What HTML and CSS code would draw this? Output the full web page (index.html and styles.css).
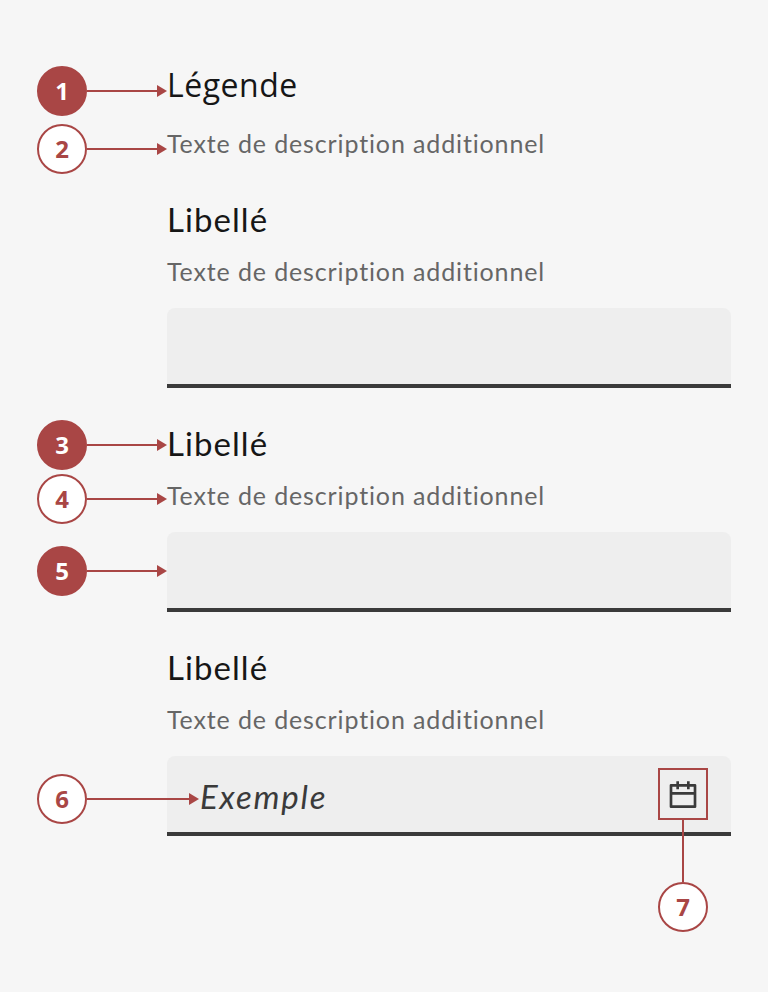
FILE: index.html
```html
<!DOCTYPE html>
<html lang="fr">
<head>
<meta charset="utf-8">
<title>Anatomie du champ de saisie</title>
<link rel="stylesheet" href="styles.css">
</head>
<body>
<main class="anatomy">
  <section class="group">
    <div class="legend"><span class="legend-text">Légende</span>
      <div class="callout callout-1"><span class="badge solid">1</span><i class="arrow"></i></div>
    </div>
    <div class="hint"><span>Texte de description additionnel</span>
      <div class="callout callout-2"><span class="badge">2</span><i class="arrow"></i></div>
    </div>
  </section>
  <section class="field">
    <div class="label"><span>Libellé</span></div>
    <div class="hint"><span>Texte de description additionnel</span></div>
    <div class="input"></div>
  </section>
  <section class="field">
    <div class="label"><span>Libellé</span>
      <div class="callout callout-3"><span class="badge solid">3</span><i class="arrow"></i></div>
    </div>
    <div class="hint"><span>Texte de description additionnel</span>
      <div class="callout callout-4"><span class="badge">4</span><i class="arrow"></i></div>
    </div>
    <div class="input">
      <div class="callout callout-5"><span class="badge solid">5</span><i class="arrow"></i></div>
    </div>
  </section>
  <section class="field">
    <div class="label"><span>Libellé</span></div>
    <div class="hint"><span>Texte de description additionnel</span></div>
    <div class="input">
      <span class="placeholder">Exemple</span>
      <div class="icon-frame">
        <svg class="icon" viewBox="0 0 24 24" aria-hidden="true"><path d="M9 1v2h6V1h2v2h4a1 1 0 0 1 1 1v16a1 1 0 0 1-1 1H3a1 1 0 0 1-1-1V4a1 1 0 0 1 1-1h4V1h2Zm11 10H4v8h16v-8ZM7 5H4v4h16V5h-3v2h-2V5H9v2H7V5Z"/></svg>
        <div class="callout-down"><span class="badge">7</span></div>
      </div>
      <div class="callout callout-6"><span class="badge">6</span><i class="arrow"></i></div>
    </div>
  </section>
</main>
</body>
</html>
```
FILE: styles.css
```css
* { box-sizing: border-box; }
body {
  margin: 0;
  background: #f6f6f6;
  font-family: Lato, "Open Sans", sans-serif;
}
.anatomy {
  display: flex;
  flex-direction: column;
  gap: 32px;
  height: 992px;
  padding: 60px 37px 0 167px;
}
.group { display: flex; flex-direction: column; gap: 16px; }
.field { display: flex; flex-direction: column; }
.legend, .label, .hint, .input { position: relative; }
.legend, .label {
  height: 48px;
  font-size: 33px;
  color: #161616;
}
.legend {
  line-height: 50px;
  font-family: "Open Sans", sans-serif;
  font-size: 32px;
  letter-spacing: 0.5px;
}
.label {
  line-height: 46px;
  letter-spacing: 1.05px;
}
.hint {
  height: 40px;
  line-height: 38px;
  font-size: 25px;
  letter-spacing: 0.87px;
  color: #666;
}
.label + .hint { margin-top: 8px; }
.input {
  display: flex;
  align-items: center;
  justify-content: space-between;
  height: 80px;
  margin-top: 16px;
  padding: 0 23px 0 33px;
  border-radius: 8px 8px 0 0;
  background: #eee;
  box-shadow: inset 0 -4px 0 #3a3a3a;
}
.placeholder {
  font-size: 33px;
  font-style: italic;
  line-height: 48px;
  letter-spacing: 1.8px;
  color: #3a3a3a;
}
.icon-frame {
  position: relative;
  width: 50px;
  height: 52px;
  margin-bottom: 4px;
  padding: 10px 7px;
  border: 2px solid #a94645;
}
.icon { display: block; width: 32px; height: 32px; fill: #3a3a3a; }
.badge {
  flex: none;
  width: 50px;
  height: 50px;
  border: 2px solid #a94645;
  border-radius: 50%;
  background: #fff;
  color: #a94645;
  font: bold 24px/46px "Open Sans", sans-serif;
  letter-spacing: 0;
  text-align: center;
}
.badge.solid { background: #a94645; color: #fff; }
.callout {
  position: absolute;
  left: -130px;
  display: flex;
  align-items: center;
  width: 130px;
}
.arrow {
  flex: 1;
  height: 12px;
  background: linear-gradient(#a94645, #a94645) 0 5px / calc(100% - 8px) 2px no-repeat;
  display: flex;
  justify-content: flex-end;
}
.arrow::after {
  content: "";
  border-left: 10px solid #a94645;
  border-top: 6px solid transparent;
  border-bottom: 6px solid transparent;
}
.callout-1 { top: 6px; }
.callout-2 { top: 0; }
.callout-3 { top: 0; }
.callout-4 { top: -2px; }
.callout-5 { top: 14px; }
.callout-6 { top: 18px; width: 162px; }
.callout-down {
  position: absolute;
  top: 50px;
  left: -2px;
  display: flex;
  flex-direction: column;
  align-items: center;
}
.callout-down::before {
  content: "";
  width: 2px;
  height: 62px;
  background: #a94645;
}
```
